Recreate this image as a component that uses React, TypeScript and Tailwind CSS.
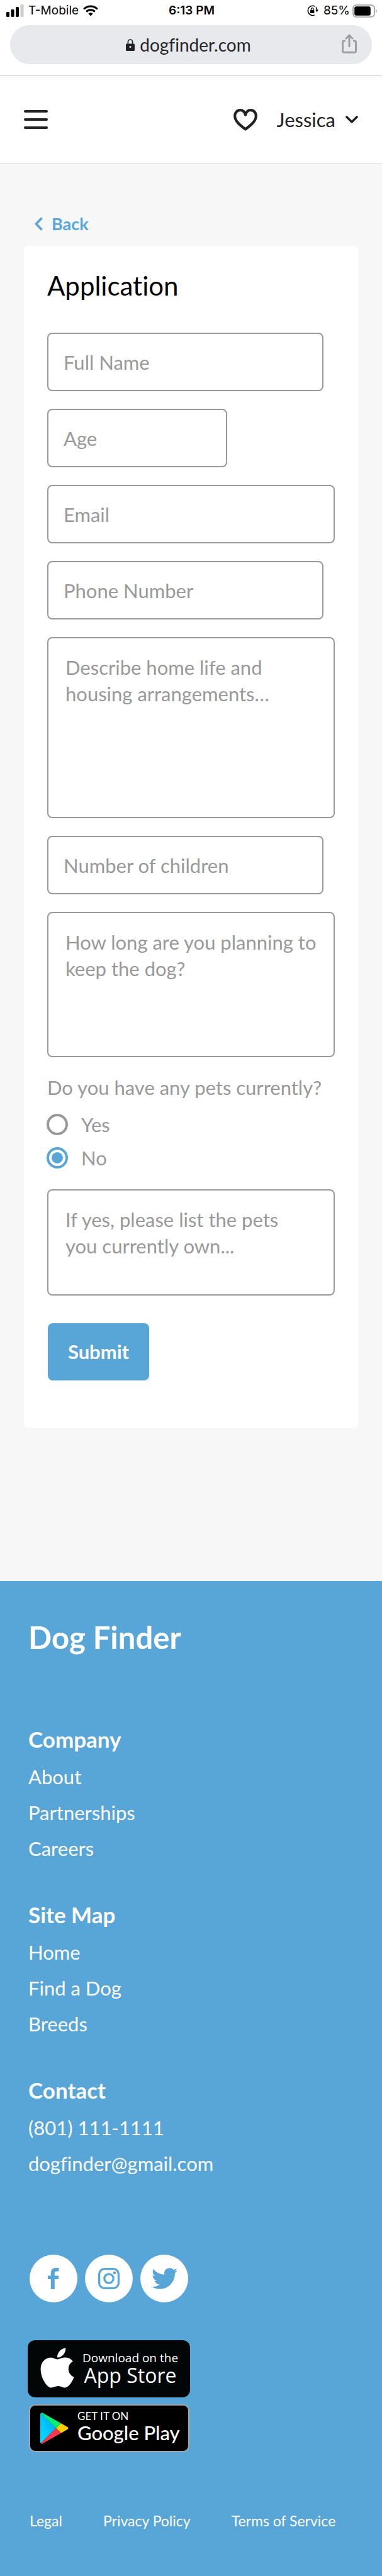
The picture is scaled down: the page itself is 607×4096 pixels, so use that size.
import React, { useState } from "react";
import { FaApple, FaTwitter } from "react-icons/fa";

interface LinkItem {
  label: string;
  href: string;
}

const footerSections: { title: string; links: LinkItem[] }[] = [
  {
    title: "Company",
    links: [
      { label: "About", href: "#about" },
      { label: "Partnerships", href: "#partnerships" },
      { label: "Careers", href: "#careers" },
    ],
  },
  {
    title: "Site Map",
    links: [
      { label: "Home", href: "#home" },
      { label: "Find a Dog", href: "#find" },
      { label: "Breeds", href: "#breeds" },
    ],
  },
  {
    title: "Contact",
    links: [
      { label: "(801) 111-1111", href: "tel:8011111111" },
      { label: "dogfinder@gmail.com", href: "mailto:dogfinder@gmail.com" },
    ],
  },
];

const fieldClass =
  "block rounded-lg border-2 border-[#999999] bg-white text-[31px] text-[#222222] placeholder:text-[#999999] placeholder:opacity-100";

const BrowserBar: React.FC = () => (
  <div className="border-b border-[#c9c9cb] bg-white pb-[18px]">
    {/* Status row */}
    <div className="grid h-[34px] grid-cols-3 items-center pr-2 pl-2.5 font-[Inter,sans-serif] text-[19px] text-black">
      <div className="flex items-center gap-[7px]">
        <svg className="h-[20px] w-[28px]" viewBox="0 0 28 20">
          <rect x="0" y="12" width="5" height="8" rx="1.4" />
          <rect x="7.5" y="8" width="5" height="12" rx="1.4" />
          <rect x="15" y="4" width="5" height="16" rx="1.4" />
          <rect x="22.5" y="0" width="5" height="20" rx="1.4" fill="#cccccc" />
        </svg>
        <span>T-Mobile</span>
        <svg className="h-[18px] w-[24px]" viewBox="0 0 24 18" fill="none" stroke="#000" strokeWidth="3">
          <path d="M1.2 6.4a15.3 15.3 0 0 1 21.6 0" />
          <path d="M5.2 10.6a9.6 9.6 0 0 1 13.6 0" />
          <path d="M12 17.6l-3.6-3.8a5.2 5.2 0 0 1 7.2 0z" fill="#000" stroke="none" />
        </svg>
      </div>
      <span className="text-center font-semibold">6:13 PM</span>
      <div className="flex items-center justify-end gap-[4px]">
        <svg className="mr-[4px] h-[18px] w-[18px]" viewBox="0 0 18 18" fill="none" stroke="#000" strokeWidth="1.5">
          <path d="M12.6 2.2A7.6 7.6 0 1 0 11.8 15.9" />
          <path d="M14 3.4a7.6 7.6 0 0 1 1.6 5" />
          <path d="M13.2 7.6h4.6l-2.2 3.6z" fill="#000" stroke="none" />
          <rect x="5" y="8" width="6.4" height="5" rx="0.8" fill="#000" stroke="none" />
          <path d="M6.3 8V6.6a1.9 1.9 0 0 1 3.8 0V8" strokeWidth="1.2" />
        </svg>
        <span>85%</span>
        <svg className="h-[21px] w-[39px]" viewBox="0 0 39 21">
          <rect x="1" y="1" width="34" height="19" rx="5" fill="none" stroke="#9a9a9a" strokeWidth="1.6" />
          <rect x="3.2" y="3.2" width="25.6" height="14.6" rx="2.8" />
          <path d="M37 7.5c2 .7 2 5.3 0 6z" fill="#9a9a9a" />
        </svg>
      </div>
    </div>
    {/* Address pill */}
    <div className="mx-4 mt-[6px] grid h-[62px] grid-cols-[1fr_auto_1fr] items-center rounded-full bg-[#e8e9ed] px-6">
      <span />
      <div className="mr-2 flex items-center gap-2 text-[28px] text-[#24262b]">
        <svg className="h-[19px] w-[14px]" viewBox="0 0 14 19">
          <rect x="0" y="7.5" width="14" height="11.5" rx="1.6" fill="#202124" />
          <path d="M3.4 8V4.6a3.6 3.6 0 0 1 7.2 0V8" fill="none" stroke="#202124" strokeWidth="1.7" />
          <circle cx="7" cy="12.4" r="1.5" fill="#e8e9ed" />
        </svg>
        <span>dogfinder.com</span>
      </div>
      <button type="button" aria-label="Share" className="justify-self-end">
        <svg className="h-[34px] w-[24px]" viewBox="0 0 24 34" fill="none" stroke="#9aa0a6" strokeWidth="3">
          <path d="M6 11H3.5q-2 0-2 2v14.200q0 2 2 2h17q2 0 2-2V13q0-2-2-2H18" />
          <path d="M12 21V2.500M6.200 8L12 2.200 17.800 8" />
        </svg>
      </button>
    </div>
  </div>
);

const SiteHeader: React.FC = () => (
  <header className="flex h-[140px] items-center justify-between border-b-2 border-[#ebebeb] bg-white px-[38px] text-[#222222]">
    <button type="button" aria-label="Menu" className="flex flex-col gap-[9px]">
      <span className="h-[4px] w-[38px] rounded-full bg-[#222222]" />
      <span className="h-[4px] w-[38px] rounded-full bg-[#222222]" />
      <span className="h-[4px] w-[38px] rounded-full bg-[#222222]" />
    </button>
    <div className="flex items-center gap-[31px]">
      <button type="button" aria-label="Favorites">
        <svg className="h-[35px] w-[38px]" viewBox="0 0 38 35" fill="none" stroke="#222222" strokeWidth="4.2" strokeLinejoin="round">
          <path d="M19 32.500C9 25 2.200 19 2.200 11.500 2.200 6 6 2.200 10.700 2.200c4 0 7 2.600 8.300 7.400 1.300-4.800 4.300-7.400 8.300-7.400 4.700 0 8.500 3.800 8.500 9.300C35.800 19 29 25 19 32.500z" />
        </svg>
      </button>
      <button type="button" className="flex items-center gap-4 text-[31px] leading-9">
        Jessica
        <svg className="h-[12px] w-[20px]" viewBox="0 0 20 12" fill="none" stroke="#222222" strokeWidth="3.6" strokeLinecap="round" strokeLinejoin="round">
          <path d="M2 2l8 8 8-8" />
        </svg>
      </button>
    </div>
  </header>
);

const PetChoice: React.FC<{ label: string; checked: boolean; onSelect: () => void }> = ({ label, checked, onSelect }) => (
  <label className="flex items-center gap-[21px] text-[31px] leading-[34px]">
    <input
      type="radio"
      name="pets"
      checked={checked}
      onChange={onSelect}
      className="-ml-px h-[34px] w-[34px] appearance-none rounded-full border-4 border-[#999999] bg-white bg-clip-content p-[4px] checked:border-[#58a5d8] checked:bg-[#58a5d8]"
    />
    {label}
  </label>
);

const ApplicationForm: React.FC = () => {
  const [hasPets, setHasPets] = useState(false);

  return (
    <form
      className="mt-[19px] rounded-lg bg-white px-[37px] pt-[39px] pb-[76px]"
      onSubmit={(e) => e.preventDefault()}
    >
      <h1 className="text-[42px] leading-[48px] text-black">Application</h1>

      <div className="mt-[51px] flex flex-col gap-[28px]">
        <input type="text" aria-label="Full Name" placeholder="Full Name" className={`${fieldClass} h-[93px] w-[96%] px-6`} />
        <input type="text" aria-label="Age" placeholder="Age" className={`${fieldClass} h-[93px] w-5/8 px-6`} />
        <input type="email" aria-label="Email" placeholder="Email" className={`${fieldClass} h-[93px] w-full px-6`} />
        <input type="tel" aria-label="Phone Number" placeholder="Phone Number" className={`${fieldClass} h-[93px] w-[96%] px-6`} />
        <textarea
          aria-label="Home life and housing arrangements"
          placeholder={"Describe home life and\nhousing arrangements…"}
          className={`${fieldClass} h-[288px] w-full resize-none py-[25px] pr-1 pl-[27px] leading-[42px]`}
        />
        <input type="text" aria-label="Number of children" placeholder="Number of children" className={`${fieldClass} h-[93px] w-[96%] px-6`} />
        <textarea
          aria-label="How long are you planning to keep the dog?"
          placeholder={"How long are you planning to\nkeep the dog?"}
          className={`${fieldClass} h-[231px] w-full resize-none py-[25px] pr-1 pl-[27px] leading-[42px]`}
        />
      </div>

      <fieldset className="mt-[30px] text-[#999999]">
        <legend className="text-[31px] leading-9">Do you have any pets currently?</legend>
        <div className="mt-6 flex flex-col gap-[19px]">
          <PetChoice label="Yes" checked={hasPets} onSelect={() => setHasPets(true)} />
          <PetChoice label="No" checked={!hasPets} onSelect={() => setHasPets(false)} />
        </div>
      </fieldset>

      <textarea
        aria-label="Pets you currently own"
        placeholder={"If yes, please list the pets\nyou currently own..."}
        className={`${fieldClass} mt-[33px] h-[169px] w-full resize-none py-[25px] pr-1 pl-[27px] leading-[42px]`}
      />

      <button type="submit" className="mt-[44px] ml-px block h-[91px] w-[161px] rounded-lg bg-[#58a5d8] text-[31px] font-bold text-white">
        Submit
      </button>
    </form>
  );
};

const SocialLinks: React.FC = () => (
  <div className="mt-[116px] ml-[2px] flex gap-[12px] text-[#58a5d8]">
    <a href="#facebook" aria-label="Facebook" className="flex h-[76px] w-[76px] items-center justify-center rounded-full bg-white">
      <svg className="h-[34px] w-[18px]" viewBox="0 0 18 34" fill="currentColor">
        <path d="M4.800 34V18H0v-5.600h4.800V8.500C4.800 3 7.800 0 12.600 0H17.500v5.600h-3c-2.700 0-3.700 1-3.700 3.400v3.400h6.600L16.700 18h-5.900v16z" />
      </svg>
    </a>
    <a href="#instagram" aria-label="Instagram" className="flex h-[76px] w-[76px] items-center justify-center rounded-full bg-white">
      <svg className="h-[34px] w-[34px]" viewBox="0 0 34 34" fill="none" stroke="currentColor" strokeWidth="3.2">
        <rect x="1.6" y="1.6" width="30.8" height="30.8" rx="8.4" />
        <circle cx="17" cy="17" r="7.2" />
        <circle cx="26" cy="8" r="2.2" fill="currentColor" stroke="none" />
      </svg>
    </a>
    <a href="#twitter" aria-label="Twitter" className="flex h-[76px] w-[76px] items-center justify-center rounded-full bg-white">
      <FaTwitter className="h-[42px] w-[41px]" />
    </a>
  </div>
);

const StoreBadges: React.FC = () => (
  <div className="-ml-px mt-[60px] flex flex-col items-start gap-[11px]">
    <a href="#app-store" className="flex h-[91px] w-[258px] items-center gap-[13px] rounded-xl bg-[#020606] pb-[4px] pl-[20px] font-['Open_Sans',sans-serif] whitespace-nowrap">
      <FaApple className="h-[72px] w-[54px] shrink-0" />
      <span className="flex flex-col items-center">
        <span className="text-[19px] leading-6">Download on the</span>
        <span className="text-[32px] leading-8">App Store</span>
      </span>
    </a>
    <a href="#google-play" className="ml-[2px] flex h-[76px] w-[255px] items-center gap-[14px] rounded-[10px] border-2 border-[#a6a6a6] bg-black pl-[16px] whitespace-nowrap">
      <svg className="h-[50px] w-[45px] shrink-0" viewBox="0 0 45 50">
        <defs>
          <linearGradient id="playBlue" x1="1" y1="0" x2="0" y2="1">
            <stop offset="0" stopColor="#00a0ff" />
            <stop offset="1" stopColor="#00e2ff" />
          </linearGradient>
        </defs>
        <path d="M.8 1L25 25 .8 49Q0 48 0 47V3Q0 2 .8 1z" fill="url(#playBlue)" />
        <path d="M.8 1Q2-.5 4 .7L33 17.300 25 25z" fill="#00f076" />
        <path d="M33 17.300L43 23q3 2 0 4L33 32.700 25 25z" fill="#ffce00" />
        <path d="M.8 49Q2 50.500 4 49.300L33 32.700 25 25z" fill="#f9374a" />
      </svg>
      <span className="flex flex-col items-start pb-[6px]">
        <span className="text-[17px] leading-5">GET IT ON</span>
        <span className="text-[31px] leading-8 font-medium">Google Play</span>
      </span>
    </a>
  </div>
);

const Footer: React.FC = () => (
  <footer className="bg-[#58a5d8] px-[45px] pt-[62px] pb-[74px] text-white">
    <p className="text-[49px] leading-[54px] font-bold">Dog Finder</p>
    <div className="mt-[115px] flex flex-col gap-[56px]">
      {footerSections.map((section) => (
        <nav key={section.title} aria-label={section.title}>
          <h2 className="mb-[12px] text-[35px] leading-10 font-bold">{section.title}</h2>
          <ul>
            {section.links.map((link) => (
              <li key={link.label} className="text-[31px] leading-[57px]">
                <a href={link.href}>{link.label}</a>
              </li>
            ))}
          </ul>
        </nav>
      ))}
    </div>
    <SocialLinks />
    <StoreBadges />
    <div className="mt-[95px] ml-[2px] flex gap-[65px] text-[23px] leading-7 whitespace-nowrap">
      <a href="#legal">Legal</a>
      <a href="#privacy">Privacy Policy</a>
      <a href="#terms">Terms of Service</a>
    </div>
  </footer>
);

const App: React.FC = () => (
  <div className="bg-[#f7f7f7] font-[Lato,sans-serif] [font-variant-ligatures:no-common-ligatures]">
    <BrowserBar />
    <SiteHeader />
    <main className="px-[38px] pt-[79px] pb-[243px]">
      <a href="#back" className="ml-[17px] flex w-fit items-center gap-[14px] text-[27px] leading-8 font-bold text-[#58a5d8]">
        <svg className="h-[22px] w-[13px]" viewBox="0 0 13 22" fill="none" stroke="currentColor" strokeWidth="3.6">
          <path d="M11.500 1.500L2.500 11l9 9.500" />
        </svg>
        Back
      </a>
      <ApplicationForm />
    </main>
    <Footer />
  </div>
);

export default App;
